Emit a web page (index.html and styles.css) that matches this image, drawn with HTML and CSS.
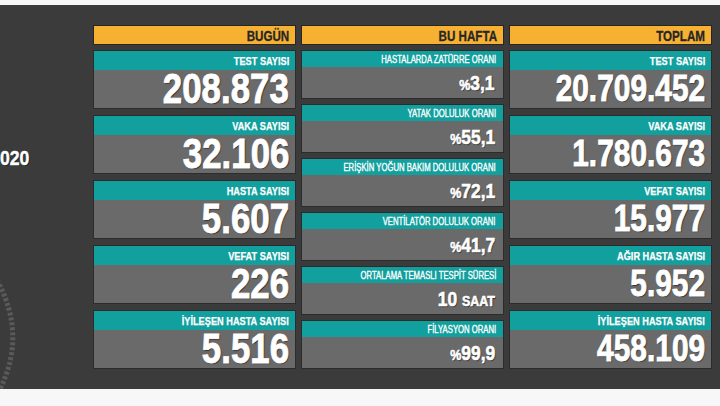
FILE: index.html
```html
<!DOCTYPE html>
<html lang="tr">
<head>
<meta charset="utf-8">
<title>Koronavirüs Tablosu</title>
<link rel="stylesheet" href="styles.css">
</head>
<body>
<div class="page">
  <div class="strip-top"></div>
  <div class="board">
    <div class="side">
      <div class="date"><span class="t">020</span></div>
      <svg class="wreath" width="30" height="109" viewBox="0 0 30 109">
        <path d="M-3 0 Q 27 55 0 109" fill="none" stroke="#5a5a5a" stroke-width="5" stroke-dasharray="3 2"/>
      </svg>
    </div>
    <div class="cols">
      <div class="col big">
        <div class="head"><span class="t">BUGÜN</span></div>
        <div class="cards">
          <div class="card"><div class="lbl"><span class="t">TEST SAYISI</span></div><div class="val"><span class="t">208.873</span></div></div>
          <div class="card"><div class="lbl"><span class="t">VAKA SAYISI</span></div><div class="val"><span class="t">32.106</span></div></div>
          <div class="card"><div class="lbl"><span class="t">HASTA SAYISI</span></div><div class="val"><span class="t">5.607</span></div></div>
          <div class="card"><div class="lbl"><span class="t">VEFAT SAYISI</span></div><div class="val"><span class="t">226</span></div></div>
          <div class="card"><div class="lbl"><span class="t">İYİLEŞEN HASTA SAYISI</span></div><div class="val"><span class="t">5.516</span></div></div>
        </div>
      </div>
      <div class="col mid">
        <div class="head"><span class="t">BU HAFTA</span></div>
        <div class="cards">
          <div class="card"><div class="lbl"><span class="t">HASTALARDA ZATÜRRE ORANI</span></div><div class="val"><span class="t"><span class="pct">%</span>3,1</span></div></div>
          <div class="card"><div class="lbl"><span class="t">YATAK DOLULUK ORANI</span></div><div class="val"><span class="t"><span class="pct">%</span>55,1</span></div></div>
          <div class="card"><div class="lbl"><span class="t">ERİŞKİN YOĞUN BAKIM DOLULUK ORANI</span></div><div class="val"><span class="t"><span class="pct">%</span>72,1</span></div></div>
          <div class="card"><div class="lbl"><span class="t">VENTİLATÖR DOLULUK ORANI</span></div><div class="val"><span class="t"><span class="pct">%</span>41,7</span></div></div>
          <div class="card"><div class="lbl"><span class="t">ORTALAMA TEMASLI TESPİT SÜRESİ</span></div><div class="val"><span class="t">10 <span class="unit">SAAT</span></span></div></div>
          <div class="card"><div class="lbl"><span class="t">FİLYASYON ORANI</span></div><div class="val"><span class="t"><span class="pct">%</span>99,9</span></div></div>
        </div>
      </div>
      <div class="col big total">
        <div class="head"><span class="t">TOPLAM</span></div>
        <div class="cards">
          <div class="card"><div class="lbl"><span class="t">TEST SAYISI</span></div><div class="val"><span class="t">20.709.452</span></div></div>
          <div class="card"><div class="lbl"><span class="t">VAKA SAYISI</span></div><div class="val"><span class="t">1.780.673</span></div></div>
          <div class="card"><div class="lbl"><span class="t">VEFAT SAYISI</span></div><div class="val"><span class="t">15.977</span></div></div>
          <div class="card"><div class="lbl"><span class="t">AĞIR HASTA SAYISI</span></div><div class="val"><span class="t">5.952</span></div></div>
          <div class="card"><div class="lbl"><span class="t">İYİLEŞEN HASTA SAYISI</span></div><div class="val"><span class="t">458.109</span></div></div>
        </div>
      </div>
    </div>
  </div>
  <div class="strip-bottom"></div>
</div>
</body>
</html>
```

FILE: styles.css
```css
html, body {
  margin: 0;
  padding: 0;
  background: #f7f7f7;
}
body {
  font-family: "Liberation Sans", Arial, sans-serif;
  font-weight: bold;
  color: #fff;
}
.page {
  width: 720px;
  height: 406px;
  display: flex;
  flex-direction: column;
  overflow: hidden;
}
.strip-top {
  height: 5px;
  background: #f7f7f7;
}
.board {
  height: 384px;
  background: #3b3b3b;
  display: flex;
}
.strip-bottom {
  flex: 1;
  background: #f7f7f7;
}
.t {
  display: inline-block;
  transform: scaleX(0.8);
  transform-origin: 100% 50%;
  white-space: nowrap;
}
.side {
  width: 93px;
  display: flex;
  flex-direction: column;
}
.date {
  margin-top: 141px;
  height: 24px;
  font-size: 21px;
  line-height: 24px;
  text-shadow: 1px 1px 0 #222;
  -webkit-text-stroke: 0.4px #fff;
}
.date .t {
  transform: scaleX(0.84);
  transform-origin: 0 50%;
}
.wreath {
  margin-top: 110px;
  display: block;
}
.cols {
  display: grid;
  grid-template-columns: 203px 203px 203px;
  column-gap: 5px;
  padding-top: 20px;
}
.col {
  display: flex;
  flex-direction: column;
}
.head {
  height: 20px;
  box-sizing: border-box;
  border: 1px solid #262626;
  background: #f6b133;
  color: #262626;
  font-size: 14.5px;
  line-height: 20px;
  display: flex;
  justify-content: flex-end;
  padding-right: 6px;
  margin-bottom: 5px;
  -webkit-text-stroke: 0.3px #262626;
}
.cards {
  display: flex;
  flex-direction: column;
  gap: 6px;
}
.mid .cards {
  gap: 5px;
}
.card {
  box-sizing: border-box;
  border: 1px solid #2c2c2c;
  background: #6a6a6a;
  display: flex;
  flex-direction: column;
}
.lbl {
  background: #12a09e;
  display: flex;
  justify-content: flex-end;
  padding-right: 6px;
  font-size: 11.5px;
  height: 19px;
  line-height: 20px;
  -webkit-text-stroke: 0.25px #fff;
}
.val {
  height: 38px;
  display: flex;
  justify-content: flex-end;
  padding-right: 6px;
  font-size: 42px;
  line-height: 38px;
  text-shadow: 1px 1px 1px #2a2a2a;
  -webkit-text-stroke: 0.9px #fff;
}
.val .t {
  transform: scaleX(0.83);
}
.total .val {
  font-size: 36px;
}
.mid .lbl {
  height: 16px;
  line-height: 17px;
  font-size: 10px;
  font-weight: normal;
  -webkit-text-stroke: 0.35px #fff;
  padding-right: 7px;
}
.mid .lbl .t {
  transform: scaleX(0.77);
}
.mid .val {
  height: 31px;
  font-size: 21px;
  line-height: 31px;
  padding-right: 8px;
  -webkit-text-stroke: 0.6px #fff;
}
.pct {
  font-size: 15px;
}
.unit {
  font-size: 15px;
}
```
